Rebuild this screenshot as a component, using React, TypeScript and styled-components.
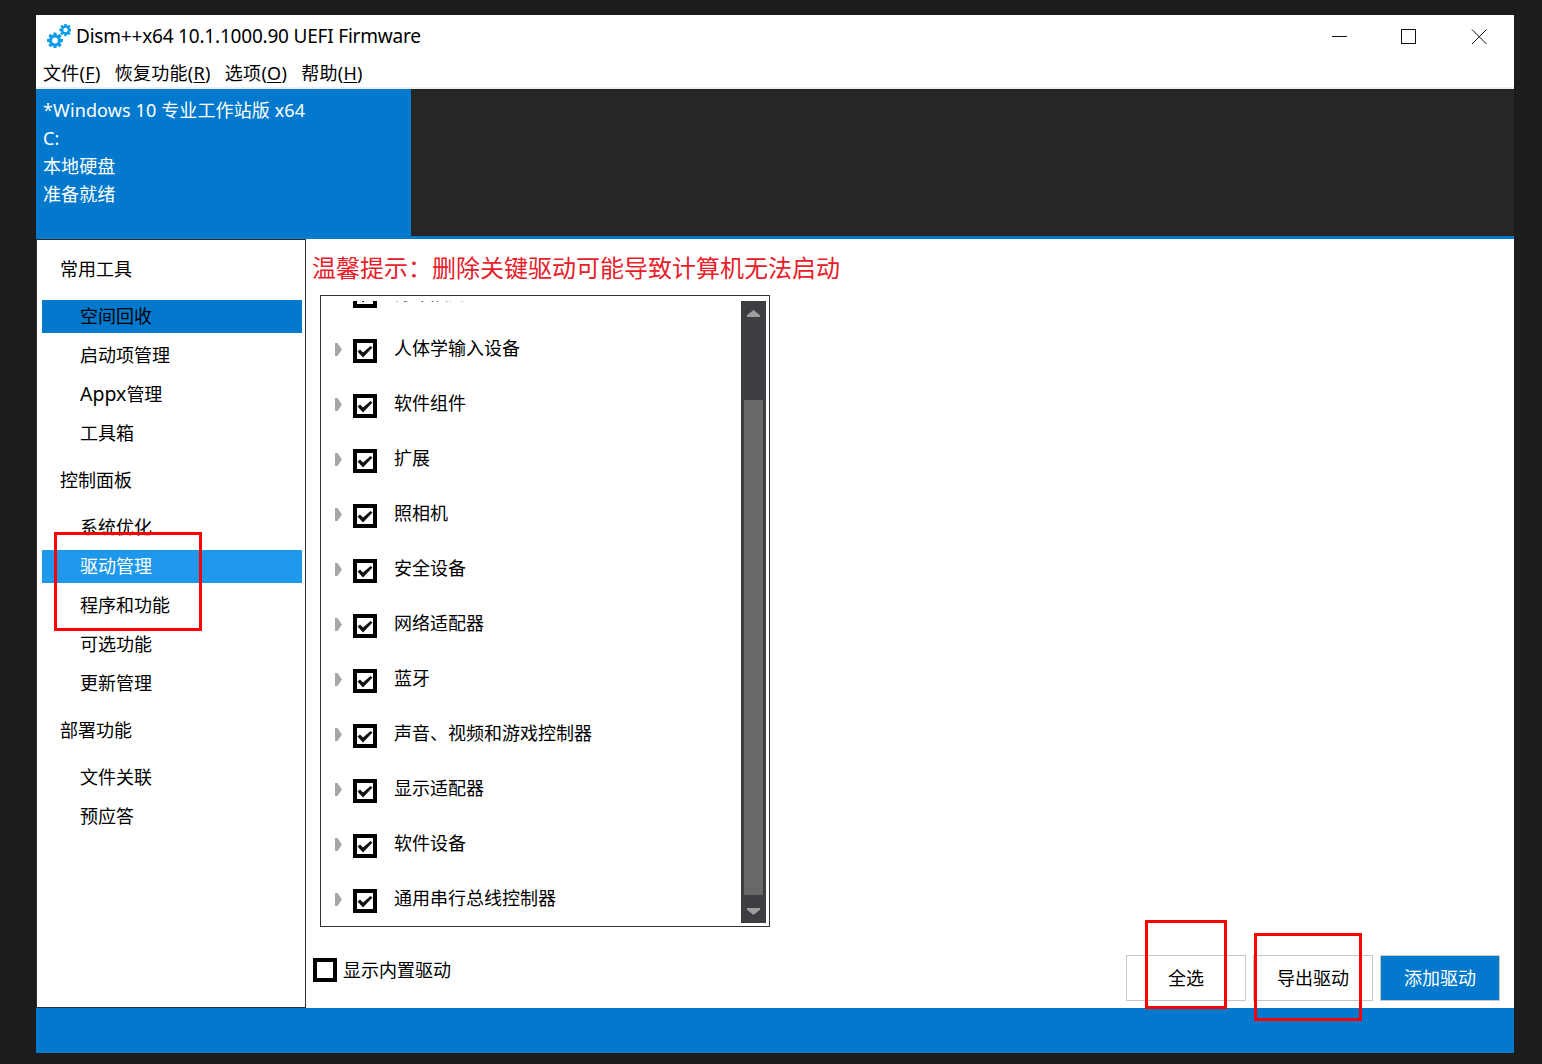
import React from "react";
import styled, { createGlobalStyle } from "styled-components";

const BLUE = "#0279cd";
const UI_FONT = `"Noto Sans", "Noto Sans CJK SC", sans-serif`;

const Global = createGlobalStyle`
  html, body { margin: 0; padding: 0; background: #1c1c1c; }
  body { font-family: ${UI_FONT}; font-size: 18px; color: #000; overflow: hidden; }
  * { box-sizing: border-box; }
`;

const Window = styled.div`
  position: relative;
  margin: 15px 0 0 36px;
  width: 1478px;
  height: 1038px;
  display: flex;
  flex-direction: column;
  background: #fff;
`;

const TitleBar = styled.div`
  height: 42px;
  display: flex;
  align-items: center;
  padding-left: 11px;
  background: #fff;
`;

const TitleText = styled.span`
  margin-left: 5px;
  font-size: 19px;
  letter-spacing: -0.2px;
  line-height: 42px;
  color: #000;
  flex: 1;
  white-space: nowrap;
`;

const WinButtons = styled.div`
  display: flex;
`;

const WinButton = styled.div`
  width: 70px;
  height: 42px;
  padding-top: 1px;
  display: flex;
  align-items: center;
  justify-content: center;
`;

const MenuBar = styled.div`
  height: 32px;
  padding: 2px 0 0 7px;
  display: flex;
  gap: 14px;
  align-items: center;
  border-bottom: 2px solid #eeeeee;
  background: #fff;
`;

const MenuItem = styled.span`
  font-size: 18px;
  letter-spacing: 0.3px;
  line-height: 28px;
  white-space: nowrap;
  u { text-underline-offset: 2px; }
`;

const Header = styled.div`
  height: 150px;
  display: flex;
  background: ${BLUE};
`;

const ImageInfo = styled.div`
  width: 375px;
  padding: 7px 0 0 7px;
  color: #fff;
`;

const InfoLine = styled.div`
  height: 28px;
  line-height: 28px;
  font-size: 18px;
  letter-spacing: 0.12px;
  white-space: nowrap;
`;

const HeaderDark = styled.div`
  flex: 1;
  margin-bottom: 3px;
  background: #262626;
`;

const Main = styled.div`
  height: 769px;
  display: flex;
  background: #fff;
`;

const Sidebar = styled.nav`
  width: 270px;
  border: 1px solid #2e2e2e;
  padding-top: 14px;
  display: flex;
  flex-direction: column;
  background: #fff;
`;

const GroupHead = styled.div`
  height: 30px;
  line-height: 30px;
  margin: 0 0 16px 23px;
  font-size: 18px;
`;

const NavItem = styled.div<{ $state?: "active" | "hot" }>`
  width: 260px;
  height: 33px;
  line-height: 33px;
  margin: 0 0 6px 5px;
  padding-left: 38px;
  font-size: 18px;
  color: ${(p) => (p.$state === "hot" ? "#fff" : "#000")};
  background: ${(p) =>
    p.$state === "active" ? BLUE : p.$state === "hot" ? "#1e98ea" : "transparent"};
`;

const LatinRun = styled.span`
  font-size: 19.5px;
  line-height: 0;
`;

const NavGroup = styled.div`
  display: flex;
  flex-direction: column;
  margin-bottom: 9px;
`;

const Content = styled.section`
  flex: 1;
  padding: 11px 14px 0 7px;
  display: flex;
  flex-direction: column;
`;

const Hint = styled.div`
  height: 36px;
  line-height: 36px;
  margin-left: -1px;
  font-size: 24px;
  color: #e8202a;
  white-space: nowrap;
`;

const Tree = styled.div`
  width: 450px;
  height: 632px;
  margin: 9px 0 0 7px;
  border: 1px solid #333;
  display: flex;
  background: #fff;
`;

const TreeViewport = styled.div`
  flex: 1;
  margin-top: 5px;
  height: 622px;
  overflow: hidden;
`;

const TreeList = styled.div`
  margin-top: -32px;
`;

const TreeRow = styled.div`
  height: 55px;
  display: flex;
  align-items: flex-start;
  padding: 15px 0 0 14px;
`;

const Expander = styled.span`
  width: 7px;
  height: 13px;
  margin-top: 4px;
  background: #a6a6a6;
  clip-path: polygon(0 0, 35% 0, 100% 50%, 35% 100%, 0 100%);
`;

const Box = styled.span`
  width: 24px;
  height: 24px;
  border: 4px solid #000;
  display: flex;
  align-items: center;
  justify-content: center;
  flex: none;
  background: #fff;
`;

const RowBox = styled(Box)`
  margin-left: 11px;
`;

const RowLabel = styled.span`
  margin: -5px 0 0 17px;
  font-size: 18px;
  line-height: 28px;
  white-space: nowrap;
`;

const ScrollBar = styled.div`
  width: 25px;
  margin: 5px 3px 3px 0;
  display: flex;
  flex-direction: column;
  background: #3e3e42;
`;

const ScrollCap = styled.div<{ $height: number; $top: number }>`
  height: ${(p) => p.$height}px;
  padding-top: ${(p) => p.$top}px;
  display: flex;
  justify-content: center;
  align-items: flex-start;
`;

const ScrollArrow = styled.span<{ $down?: boolean }>`
  width: 13px;
  height: 7px;
  background: #9e9e9e;
  clip-path: ${(p) =>
    p.$down
      ? "polygon(0 0, 100% 0, 100% 25%, 50% 100%, 0 25%)"
      : "polygon(50% 0, 100% 75%, 100% 100%, 0 100%, 0 75%)"};
`;

const ScrollThumb = styled.div`
  flex: 1;
  margin: 0 3px;
  background: #686868;
`;

const BottomRow = styled.div`
  margin-top: 28px;
  height: 46px;
  display: flex;
  justify-content: space-between;
  align-items: flex-start;
`;

const BuiltIn = styled.label`
  display: flex;
  align-items: flex-start;
  padding-top: 3px;
`;

const BuiltInText = styled.span`
  margin: -2px 0 0 6px;
  line-height: 28px;
  font-size: 18px;
`;

const Buttons = styled.div`
  display: flex;
  gap: 7px;
`;

const Button = styled.div<{ $primary?: boolean }>`
  width: 120px;
  height: 46px;
  padding-bottom: 2px;
  display: flex;
  align-items: center;
  justify-content: center;
  font-size: 18px;
  border: 1px solid #c8c8c8;
  color: ${(p) => (p.$primary ? "#fff" : "#000")};
  background: ${(p) => (p.$primary ? BLUE : "#fff")};
`;

const StatusBar = styled.div`
  height: 45px;
  background: ${BLUE};
`;

const Callout = styled.div<{ $x: number; $y: number; $w: number; $h: number }>`
  position: absolute;
  left: ${(p) => p.$x - 36}px;
  top: ${(p) => p.$y - 15}px;
  width: ${(p) => p.$w}px;
  height: ${(p) => p.$h}px;
  border: 3px solid #ff0000;
  pointer-events: none;
`;

const Gear = ({ cx, cy, r }: { cx: number; cy: number; r: number }) => (
  <g fill="#0c9be8">
    {[0, 45, 90, 135, 180, 225, 270, 315].map((a) => (
      <rect
        key={a}
        x={cx - r * 0.26}
        y={cy - r * 1.28}
        width={r * 0.52}
        height={r * 0.7}
        transform={`rotate(${a} ${cx} ${cy})`}
      />
    ))}
    <circle cx={cx} cy={cy} r={r * 0.72} fill="none" stroke="#0c9be8" strokeWidth={r * 0.5} />
  </g>
);

const AppIcon = () => (
  <svg width="24" height="24" viewBox="0 0 24 24">
    <Gear cx={8} cy={16.5} r={6.2} />
    <Gear cx={18.5} cy={6} r={4.8} />
  </svg>
);

const Check = () => (
  <svg width="16" height="16" viewBox="0 0 16 16">
    <path d="M0.5 8.5L3 6.5L6 9.5L13.5 3L15.5 4.5L6 14.5Z" fill="#111" />
  </svg>
);

const rows = [
  "打印队列",
  "人体学输入设备",
  "软件组件",
  "扩展",
  "照相机",
  "安全设备",
  "网络适配器",
  "蓝牙",
  "声音、视频和游戏控制器",
  "显示适配器",
  "软件设备",
  "通用串行总线控制器",
];

export default function App() {
  return (
    <>
      <Global />
      <Window>
        <TitleBar>
          <AppIcon />
          <TitleText>Dism++x64 10.1.1000.90 UEFI Firmware</TitleText>
          <WinButtons>
            <WinButton>
              <svg width="16" height="16" viewBox="0 0 16 16">
                <path d="M1 7.5H16" stroke="#111" strokeWidth="1" />
              </svg>
            </WinButton>
            <WinButton>
              <svg width="16" height="16" viewBox="0 0 16 16">
                <rect x="0.5" y="0.5" width="14" height="14" fill="none" stroke="#111" strokeWidth="1" />
              </svg>
            </WinButton>
            <WinButton>
              <svg width="16" height="16" viewBox="0 0 16 16">
                <path d="M1 0.5L15.5 15M15.5 0.5L1 15" stroke="#111" strokeWidth="1" />
              </svg>
            </WinButton>
          </WinButtons>
        </TitleBar>
        <MenuBar>
          <MenuItem>文件(<u>F</u>)</MenuItem>
          <MenuItem>恢复功能(<u>R</u>)</MenuItem>
          <MenuItem>选项(<u>O</u>)</MenuItem>
          <MenuItem>帮助(<u>H</u>)</MenuItem>
        </MenuBar>
        <Header>
          <ImageInfo>
            <InfoLine>*Windows 10 专业工作站版 x64</InfoLine>
            <InfoLine>C:</InfoLine>
            <InfoLine>本地硬盘</InfoLine>
            <InfoLine>准备就绪</InfoLine>
          </ImageInfo>
          <HeaderDark />
        </Header>
        <Main>
          <Sidebar>
            <GroupHead>常用工具</GroupHead>
            <NavGroup>
              <NavItem $state="active">空间回收</NavItem>
              <NavItem>启动项管理</NavItem>
              <NavItem><LatinRun>Appx</LatinRun>管理</NavItem>
              <NavItem>工具箱</NavItem>
            </NavGroup>
            <GroupHead>控制面板</GroupHead>
            <NavGroup>
              <NavItem>系统优化</NavItem>
              <NavItem $state="hot">驱动管理</NavItem>
              <NavItem>程序和功能</NavItem>
              <NavItem>可选功能</NavItem>
              <NavItem>更新管理</NavItem>
            </NavGroup>
            <GroupHead>部署功能</GroupHead>
            <NavGroup>
              <NavItem>文件关联</NavItem>
              <NavItem>预应答</NavItem>
            </NavGroup>
          </Sidebar>
          <Content>
            <Hint>温馨提示：删除关键驱动可能导致计算机无法启动</Hint>
            <Tree>
              <TreeViewport>
                <TreeList>
                  {rows.map((r) => (
                    <TreeRow key={r}>
                      <Expander />
                      <RowBox>
                        <Check />
                      </RowBox>
                      <RowLabel>{r}</RowLabel>
                    </TreeRow>
                  ))}
                </TreeList>
              </TreeViewport>
              <ScrollBar>
                <ScrollCap $height={99} $top={9}>
                  <ScrollArrow />
                </ScrollCap>
                <ScrollThumb />
                <ScrollCap $height={28} $top={13}>
                  <ScrollArrow $down />
                </ScrollCap>
              </ScrollBar>
            </Tree>
            <BottomRow>
              <BuiltIn>
                <Box />
                <BuiltInText>显示内置驱动</BuiltInText>
              </BuiltIn>
              <Buttons>
                <Button>全选</Button>
                <Button>导出驱动</Button>
                <Button $primary>添加驱动</Button>
              </Buttons>
            </BottomRow>
          </Content>
        </Main>
        <StatusBar />
        <Callout $x={54} $y={532} $w={148} $h={99} />
        <Callout $x={1145} $y={920} $w={82} $h={89} />
        <Callout $x={1254} $y={933} $w={108} $h={88} />
      </Window>
    </>
  );
}
